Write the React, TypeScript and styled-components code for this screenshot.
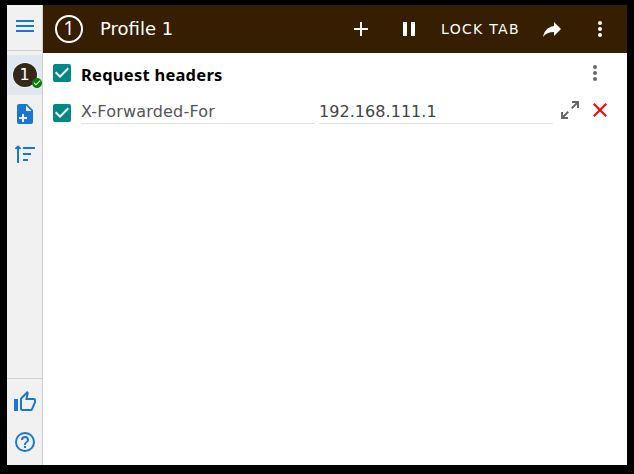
import React from "react";
import styled, { createGlobalStyle } from "styled-components";

const Global = createGlobalStyle`
  * { box-sizing: border-box; }
  html, body { margin: 0; background: #000; }
  body { font-family: "DejaVu Sans", sans-serif; overflow: hidden; }
`;

const paths = {
  menu: "M3,6H21V8H3V6M3,11H21V13H3V11M3,16H21V18H3V16Z",
  addFile: "M14,1H6A2,2 0 0,0 4,3V19A2,2 0 0,0 6,21H18A2,2 0 0,0 20,19V7L14,1M13,8V2.5L18.5,8H13M9,11H11V14H14V16H11V19H9V16H6V14H9V11Z",
  sort: "M4,20V6H2V5L5,2.2L8,5V6H6V20H4M10,4H22V6H10V4M10,10H18V12H10V10M10,16H15V18H10V16Z",
  thumb: "M5,9V21H1V9H5M9,21A2,2 0 0,1 7,19V9C7,8.45 7.22,7.95 7.59,7.59L14.17,1L15.23,2.06C15.5,2.33 15.67,2.7 15.67,3.11L15.64,3.43L14.69,8H21C22.11,8 23,8.9 23,10V12C23,12.26 22.95,12.5 22.86,12.73L19.84,19.78C19.54,20.5 18.83,21 18,21H9M9,19H18.03L21,12V10H12.21L13.34,4.68L9,9.03V19Z",
  help: "M11,18H13V16H11V18M12,2A10,10 0 0,0 2,12A10,10 0 0,0 12,22A10,10 0 0,0 22,12A10,10 0 0,0 12,2M12,20C7.59,20 4,16.41 4,12C4,7.59 7.59,4 12,4C16.41,4 20,7.59 20,12C20,16.41 16.41,20 12,20M12,6A4,4 0 0,0 8,10H10A2,2 0 0,1 12,8A2,2 0 0,1 14,10C14,12 11,11.75 11,15H13C13,12.75 16,12.5 16,10A4,4 0 0,0 12,6Z",
  plus: "M19,13H13V19H11V13H5V11H11V5H13V11H19V13Z",
  pause: "M14,19H18V5H14M6,19H10V5H6V19Z",
  share: "M21,12L14,5V9C7,10 4,15 3,20C5.5,16.5 9,14.9 14,14.9V19L21,12Z",
  dots: "M12,16A2,2 0 0,1 14,18A2,2 0 0,1 12,20A2,2 0 0,1 10,18A2,2 0 0,1 12,16M12,10A2,2 0 0,1 14,12A2,2 0 0,1 12,14A2,2 0 0,1 10,12A2,2 0 0,1 12,10M12,4A2,2 0 0,1 14,6A2,2 0 0,1 12,8A2,2 0 0,1 10,6A2,2 0 0,1 12,4Z",
  expand: "M10,21V19H6.41L10.91,14.5L9.5,13.09L5,17.59V14H3V21H10M14.5,10.91L19,6.41V10H21V3H14V5H17.59L13.09,9.5L14.5,10.91Z",
  close: "M19,6.41L17.59,5L12,10.59L6.41,5L5,6.41L10.59,12L5,17.59L6.41,19L12,13.41L17.59,19L19,17.59L13.41,12L19,6.41Z",
  checkbox: "M10,17L5,12L6.41,10.58L10,14.17L17.59,6.58L19,8M19,3H5C3.89,3 3,3.89 3,5V19A2,2 0 0,0 5,21H19A2,2 0 0,0 21,19V5C21,3.89 20.1,3 19,3Z",
  checkCircle: "M12 2C6.5 2 2 6.5 2 12S6.5 22 12 22 22 17.5 22 12 17.5 2 12 2M10 17L5 12L6.41 10.59L10 14.17L17.59 6.58L19 8L10 17Z",
};

const Svg = styled.svg`
  display: block;
  flex: none;
  fill: currentColor;
`;

const Icon = ({ name, size = 24 }: { name: keyof typeof paths; size?: number }) => (
  <Svg viewBox="0 0 24 24" width={size} height={size} aria-hidden>
    <path d={paths[name]} />
  </Svg>
);

const Popup = styled.div`
  display: flex;
  width: 620px;
  height: 460px;
  margin: 5px 7px;
  background: #fff;
`;

const Sidebar = styled.nav`
  display: flex;
  flex-direction: column;
  width: 36px;
  background: #f1f1f1;
  border-right: 1px solid #d0d0d0;
`;

const IconButton = styled.button<{ $width?: number; $height?: number; $color?: string }>`
  display: flex;
  flex: none;
  align-items: center;
  justify-content: center;
  width: ${(p) => p.$width ?? 24}px;
  height: ${(p) => p.$height ?? 24}px;
  padding: 0;
  border: 0;
  background: none;
  color: ${(p) => p.$color ?? "inherit"};
`;

const SideButton = styled(IconButton).attrs({ $width: 36, $height: 40, $color: "#1976d2" })``;

const MenuArea = styled.div`
  height: 46px;
  padding-top: 1px;
  margin-bottom: 4px;
  border-bottom: 1px solid #d0d0d0;
`;

const ProfileTab = styled.div`
  display: flex;
  align-items: center;
  justify-content: center;
  height: 40px;
  background: #e0e7f0;
`;

const Avatar = styled.div`
  position: relative;
  width: 24px;
  height: 24px;
  border-radius: 50%;
  background: #35271a;
  box-shadow: 0 0 0 1px #f1f1f1;
  color: #fff;
  font-size: 16px;
  line-height: 23px;
  text-align: center;
`;

const Badge = styled.span`
  position: absolute;
  right: -6px;
  bottom: -2px;
  color: #008000;
  background: radial-gradient(circle, #fff 4px, transparent 4.5px);
`;

const SideFooter = styled.div`
  margin-top: auto;
  padding: 3px 0;
  border-top: 1px solid #d0d0d0;
`;

const Main = styled.main`
  flex: 1;
  min-width: 0;
`;

const Header = styled.header`
  display: flex;
  align-items: center;
  height: 48px;
  padding: 0 15px 0 12px;
  background: #361e02;
  color: #fff;
`;

const ProfileNumber = styled.div`
  width: 28px;
  height: 28px;
  border: 2px solid #fff;
  border-radius: 50%;
  font-family: "Open Sans", sans-serif;
  font-size: 20px;
  font-weight: 500;
  line-height: 22px;
  text-align: center;
`;

const Title = styled.h1`
  flex: 1;
  margin: 0 0 0 17px;
  font-size: 18px;
  font-weight: 400;
  line-height: 24px;
`;

const Actions = styled.div`
  display: flex;
  align-items: center;
  gap: 24px;
`;

const LockButton = styled.button`
  width: 119px;
  margin: 0 -24px;
  padding: 0;
  border: 0;
  background: none;
  color: inherit;
  font: 14px/24px "DejaVu Sans", sans-serif;
  letter-spacing: 1.3px;
  white-space: nowrap;
`;

const Row = styled.div`
  display: flex;
  align-items: center;
  height: 40px;
  padding: 0 15px 0 7px;
`;

const HeadingRow = styled(Row)`
  padding-right: 20px;
`;

const SectionTitle = styled.h2`
  flex: 1;
  margin: 3px 0 0 7px;
  font-family: "Noto Sans", sans-serif;
  font-size: 16.5px;
  letter-spacing: 0.25px;
  line-height: 24px;
  color: #000;
`;

const Fields = styled.div`
  display: flex;
  flex: none;
  gap: 4px;
  margin: -5px 5px 0 7px;
`;

const Field = styled.div<{ $color: string; $spacing?: number }>`
  width: 234px;
  height: 26px;
  border-bottom: 1px solid #e0e0e0;
  color: ${(p) => p.$color};
  font-size: 16px;
  letter-spacing: ${(p) => p.$spacing ?? 0}px;
  line-height: 28px;
  white-space: nowrap;
`;

const RowActions = styled.div`
  display: flex;
  gap: 6px;
  margin-top: -6px;
`;

export default function App() {
  return (
    <>
      <Global />
      <Popup>
        <Sidebar>
          <MenuArea>
            <SideButton aria-label="Menu"><Icon name="menu" /></SideButton>
          </MenuArea>
          <ProfileTab>
            <Avatar>1<Badge><Icon name="checkCircle" size={12} /></Badge></Avatar>
          </ProfileTab>
          <SideButton aria-label="Add profile"><Icon name="addFile" /></SideButton>
          <SideButton aria-label="Sort profiles"><Icon name="sort" /></SideButton>
          <SideFooter>
            <SideButton aria-label="Like"><Icon name="thumb" /></SideButton>
            <SideButton aria-label="Help"><Icon name="help" /></SideButton>
          </SideFooter>
        </Sidebar>
        <Main>
          <Header>
            <ProfileNumber>1</ProfileNumber>
            <Title>Profile 1</Title>
            <Actions>
              <IconButton aria-label="Add"><Icon name="plus" /></IconButton>
              <IconButton aria-label="Pause"><Icon name="pause" /></IconButton>
              <LockButton>LOCK TAB</LockButton>
              <IconButton aria-label="Share"><Icon name="share" /></IconButton>
              <IconButton aria-label="More"><Icon name="dots" /></IconButton>
            </Actions>
          </Header>
          <HeadingRow>
            <IconButton $color="#008888"><Icon name="checkbox" /></IconButton>
            <SectionTitle>Request headers</SectionTitle>
            <IconButton $color="#666"><Icon name="dots" /></IconButton>
          </HeadingRow>
          <Row>
            <IconButton $color="#008888"><Icon name="checkbox" /></IconButton>
            <Fields>
              <Field $color="#555" $spacing={0.2}>X-Forwarded-For</Field>
              <Field $color="#444" $spacing={0.05}>192.168.111.1</Field>
            </Fields>
            <RowActions>
              <IconButton $color="#666"><Icon name="expand" /></IconButton>
              <IconButton $color="#ff0000"><Icon name="close" /></IconButton>
            </RowActions>
          </Row>
        </Main>
      </Popup>
    </>
  );
}
